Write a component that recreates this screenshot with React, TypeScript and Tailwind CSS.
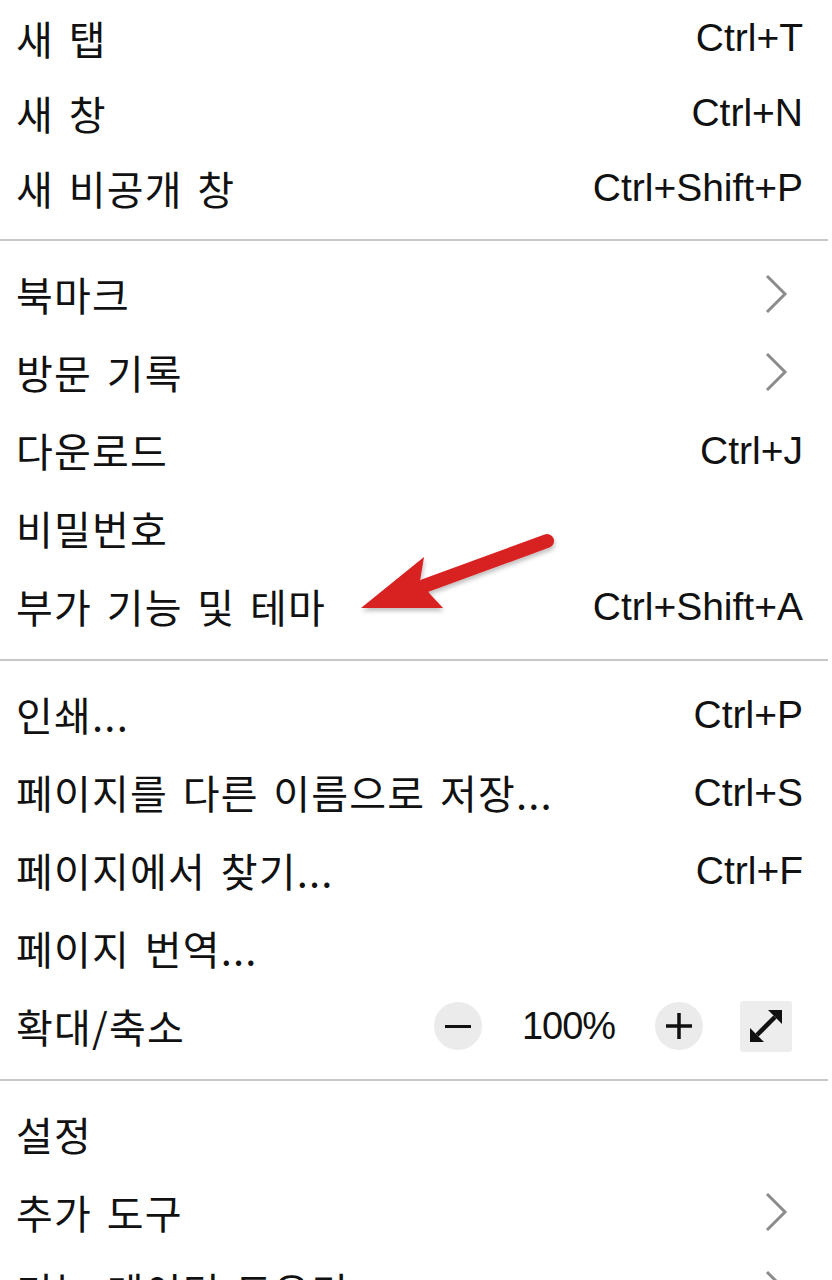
import type { ReactNode } from 'react';

/**
 * App.tsx — 브라우저 메뉴 (새 탭 ~ 추가 도구) + 빨간 화살표
 */

const KO = { fontFamily: '"Noto Sans CJK KR", "Noto Sans", sans-serif' };
const EN = { fontFamily: '"Liberation Sans", Arial, sans-serif' };

type Item = { label: string; shortcut?: string; submenu?: boolean };

const groups: Item[][] = [
  [
    { label: '새 탭', shortcut: 'Ctrl+T' },
    { label: '새 창', shortcut: 'Ctrl+N' },
    { label: '새 비공개 창', shortcut: 'Ctrl+Shift+P' },
  ],
  [
    { label: '북마크', submenu: true },
    { label: '방문 기록', submenu: true },
    { label: '다운로드', shortcut: 'Ctrl+J' },
    { label: '비밀번호' },
    { label: '부가 기능 및 테마', shortcut: 'Ctrl+Shift+A' },
  ],
];

const groupThree: Item[] = [
  { label: '인쇄...', shortcut: 'Ctrl+P' },
  { label: '페이지를 다른 이름으로 저장...', shortcut: 'Ctrl+S' },
  { label: '페이지에서 찾기...', shortcut: 'Ctrl+F' },
  { label: '페이지 번역...' },
];

const groupFour: Item[] = [
  { label: '설정' },
  { label: '추가 도구', submenu: true },
  { label: '기능 데이터 도우미', submenu: true },
];

function Chevron() {
  return (
    <svg width="24" height="40" viewBox="0 0 24 40" className="mr-[15px]">
      <path d="M3 2 L21 20 L3 38" fill="none" stroke="#8c8c8c" strokeWidth="3" />
    </svg>
  );
}

function Label({ children }: { children: ReactNode }) {
  return (
    <span
      className="text-[40px] leading-none text-[#111] whitespace-nowrap tracking-[1.2px] [word-spacing:4.5px]"
      style={KO}
    >
      {children}
    </span>
  );
}

function Row({ item, h = 'h-[78px]' }: { item: Item; h?: string }) {
  return (
    <div className={`flex items-center justify-between pl-[16px] pr-[29px] ${h}`}>
      <Label>{item.label}</Label>
      {item.shortcut && (
        <span className="text-[39px] leading-none text-[#111] whitespace-nowrap" style={EN}>
          {item.shortcut}
        </span>
      )}
      {item.submenu && <Chevron />}
    </div>
  );
}

function Divider() {
  return <div className="my-[14px] h-[2px] mr-[4px] bg-[#c8c8c8]" />;
}

function RoundBtn({ children }: { children: ReactNode }) {
  return (
    <div className="w-[48px] h-[48px] rounded-full bg-[#ebebeb] flex items-center justify-center">
      {children}
    </div>
  );
}

function ZoomRow() {
  return (
    <div className="flex items-center justify-between pl-[16px] pr-[40px] h-[78px]">
      <Label>확대/축소</Label>
      <div className="flex items-center">
        <RoundBtn>
          <div className="w-[26px] h-[3px] bg-[#111]" />
        </RoundBtn>
        <span
          className="w-[173px] text-center text-[38px] tracking-[-1px] leading-none text-[#111]"
          style={EN}
        >
          100%
        </span>
        <RoundBtn>
          <svg width="28" height="28" viewBox="0 0 28 28">
            <path d="M14 1 V27 M1 14 H27" stroke="#111" strokeWidth="3.5" />
          </svg>
        </RoundBtn>
        <div className="ml-[37px] w-[52px] h-[51px] rounded-[3px] bg-[#ededed] flex items-center justify-center">
          <svg width="36" height="36" viewBox="0 0 36 36">
            <path d="M9 27 L27 9" stroke="#111" strokeWidth="4.5" />
            <path d="M34 2 L34 16 L20 2 Z" fill="#111" />
            <path d="M2 34 L2 20 L16 34 Z" fill="#111" />
          </svg>
        </div>
      </div>
    </div>
  );
}

function RedArrow() {
  return (
    <svg
      className="absolute left-[340px] top-[520px] pointer-events-none"
      width="230"
      height="105"
      viewBox="340 520 230 105"
    >
      <defs>
        <filter id="sh" x="-20%" y="-20%" width="140%" height="160%">
          <feDropShadow dx="1" dy="3" stdDeviation="2" floodColor="#000" floodOpacity="0.25" />
        </filter>
      </defs>
      <g filter="url(#sh)">
        <line x1="424" y1="586" x2="547" y2="541" stroke="#d82222" strokeWidth="14" strokeLinecap="round" />
        <path d="M361 608 L424 557 L420 581 L430 594 L443 608 Z" fill="#d82222" />
      </g>
    </svg>
  );
}

export default function App() {
  return (
    <div className="relative w-[832px] h-[1280px] overflow-hidden bg-white">
      {groups[0].map((it) => (
        <Row key={it.label} item={it} h="h-[75px]" />
      ))}
      <Divider />
      {groups[1].map((it) => (
        <Row key={it.label} item={it} />
      ))}
      <Divider />
      {groupThree.map((it) => (
        <Row key={it.label} item={it} />
      ))}
      <ZoomRow />
      <Divider />
      {groupFour.map((it) => (
        <Row key={it.label} item={it} />
      ))}

      <RedArrow />
    </div>
  );
}
